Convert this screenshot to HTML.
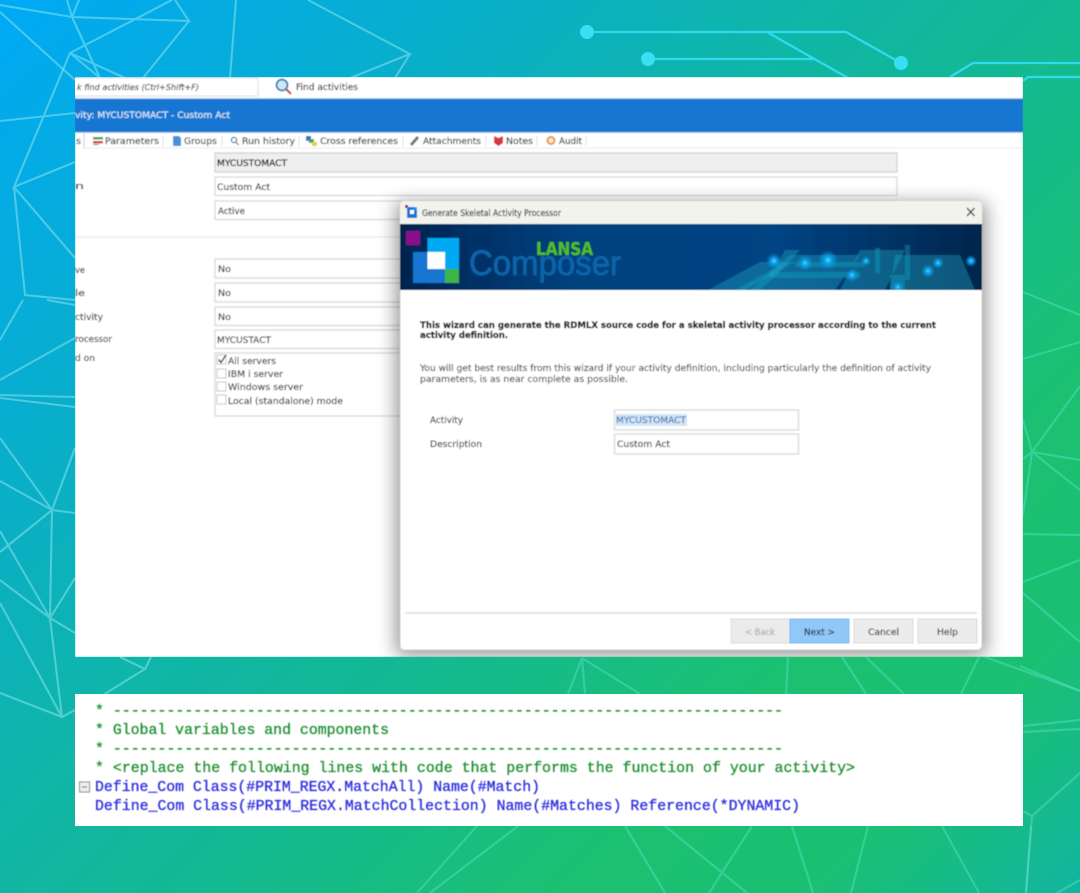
<!DOCTYPE html>
<html><head><meta charset="utf-8"><title>Skeletal Activity Processor</title>
<style>
html,body{margin:0;padding:0;width:1080px;height:893px;overflow:hidden}
body{background:linear-gradient(135deg,#00a9f6 0%,#0aafc5 27%,#0fb5aa 40%,#13b992 55%,#1bc170 74%,#1ac072 86%,#12b59f 100%)}
svg{display:block;position:absolute;left:0;top:0}
text{font-family:"DejaVu Sans","Liberation Sans",sans-serif;font-size:8.5px;fill:#3e3e3e;stroke:#3e3e3e;stroke-width:.18}
.m text{font-family:"Liberation Mono",monospace;font-size:14.88px;stroke-width:.3}
.f{fill:#fff;stroke:#ddd;stroke-width:1.5}
</style></head><body>
<svg width="1080" height="893" viewBox="0 0 1080 893" xmlns="http://www.w3.org/2000/svg">
<defs>
<clipPath id="pc"><rect x="75" y="77" width="948" height="580"/></clipPath>
<clipPath id="bc"><rect x="400" y="224" width="582" height="66"/></clipPath>
<filter id="b" x="-2%" y="-2%" width="104%" height="104%"><feGaussianBlur stdDeviation="0.5"/></filter>
<filter id="s" x="-20%" y="-20%" width="140%" height="140%"><feGaussianBlur stdDeviation="9"/></filter>
<linearGradient id="ban" x1="0" x2="1" y1="0" y2="0"><stop offset="0" stop-color="#02234f"/><stop offset=".1" stop-color="#022e62"/><stop offset=".3" stop-color="#00427e"/><stop offset=".65" stop-color="#004483"/><stop offset="1" stop-color="#02264c"/></linearGradient>
<radialGradient id="dot"><stop offset="0" stop-color="#4fe0ff"/><stop offset=".3" stop-color="#0fa8ee"/><stop offset="1" stop-color="#0a8fe0" stop-opacity="0"/></radialGradient>
</defs>

<!-- left polygon network -->
<g fill="none" stroke="#86e3ee" stroke-opacity=".55" stroke-width="2.1">
<path d="M0 5L72 17L189 21L175 0M72 17L67 0M72 17L79 0M72 17L100 78M0 12L75 80M70 53L172 0M189 21L143 78M70 53L100 78M70 53L125 78M236 0L230 78M308 0L410 54L350 78M410 54L395 78"/>
<path d="M70 53L14 187L75 162M14 187L75 258M14 187L25 295L75 300M0 121L75 113"/>
<path d="M23 300L0 340M47 300L75 305M75 338L0 380M0 395L75 397M0 398L75 407"/>
<path d="M0 438L52 510L75 448M0 481L52 510L75 513M52 510L0 552M52 510L50 618L75 578M0 531L50 618L75 633M0 580L50 618L62 717L75 710M0 603L62 717M0 693L62 717"/>
<path d="M120 657L145 669L151 657M145 669L103 695"/>
</g>
<!-- right / bottom network -->
<g fill="none" stroke="#5fe3c8" stroke-opacity=".42" stroke-width="2.2">
<path d="M582 658L568 694M582 658L585 694M582 658L640 694M788 657L786 694M842 657L866 694M866 657L904 694M979 657L961 694M985 657L1080 691"/>
<path d="M477 826L417 893M518 826L430 893M625 826L665 893M665 826L747 893M752 826L709 893M792 826L813 893M868 826L851 893M942 826L979 893M1031 826L1026 893M1080 880L1057 893"/>
<path d="M1023 292L1080 315M1023 359L1080 342M1080 386L1032 452L1080 460M1032 452L1080 490M1023 420L1032 452L1023 459M1032 452L1023 515M1023 534L1080 535M1023 582L1080 560M1023 593L1080 642M1020 666L1080 691M1023 726L1080 720M1023 732L1080 729M1080 773L1032 816L1023 811M1032 816L1026 893"/>
</g>
<!-- circuit -->
<g fill="none" stroke="#2fdcee" stroke-width="2.2">
<path d="M587 32H846L901 63M767 32L848 78M648 59H815M950 77L973 63H1080M1023 81L1028 77H1080"/>
</g>
<g fill="#36dff2"><circle cx="587" cy="32" r="7"/><circle cx="648" cy="59" r="7"/><circle cx="901" cy="63" r="7"/></g>

<!-- main panel -->
<g clip-path="url(#pc)"><g filter="url(#b)">
<rect x="75" y="77" width="948" height="580" fill="#fff"/>
<rect x="60" y="78" width="198" height="18" fill="#fff" stroke="#dcdcdc" stroke-width="1"/>
<text x="77" y="90" font-style="italic" textLength="122" lengthAdjust="spacingAndGlyphs" style="font-size:8px;fill:#555">k find activities (Ctrl+Shift+F)</text>
<circle cx="282" cy="85" r="5.500" fill="#cfe6f5" stroke="#2b7fb5" stroke-width="1.800"/>
<path d="M286 89L291 94" stroke="#d8352a" stroke-width="2.200"/>
<text x="296" y="90" textLength="62" lengthAdjust="spacingAndGlyphs">Find activities</text>
<rect x="75" y="98" width="948" height="1.400" fill="#a8c6ea"/>
<rect x="75" y="99" width="948" height="34" fill="#1976d2"/>
<rect x="75" y="132" width="948" height="1" fill="#a8c6ea"/>
<text x="75" y="118" textLength="155" lengthAdjust="spacingAndGlyphs" style="fill:#d8e8f8;stroke:#d8e8f8">vity: MYCUSTOMACT - Custom Act</text>

<!-- tabs -->
<path d="M75 133H84V149H75" fill="#fff"/>
<path d="M84 133V149" stroke="#ccc" stroke-width="1"/>
<path d="M84 148H1023" stroke="#ececec" stroke-width="1"/>
<text x="76" y="144" textLength="5" lengthAdjust="spacingAndGlyphs">s</text>
<rect x="93" y="137" width="10" height="2.400" fill="#3aa34a"/><rect x="93" y="141" width="10" height="2.400" fill="#d83a30"/><rect x="93" y="144" width="6" height="1" fill="#d83a30"/>
<text x="105" y="144" textLength="54" lengthAdjust="spacingAndGlyphs">Parameters</text>
<path d="M163 136V146M222 136V146M299 136V146M403 136V146M486 136V146M537 136V146M586 136V146" stroke="#ddd" stroke-width="1"/>
<path d="M173 136H179L181 138V146H173Z" fill="#4a90d9"/>
<text x="184" y="144" textLength="33" lengthAdjust="spacingAndGlyphs">Groups</text>
<circle cx="234" cy="140" r="2.600" fill="none" stroke="#2f7fb8" stroke-width="1.300"/><path d="M236 142L238.500 145" stroke="#c9503a" stroke-width="1.300"/>
<text x="242" y="144" textLength="53" lengthAdjust="spacingAndGlyphs">Run history</text>
<rect x="306" y="136" width="5" height="5" fill="#3a70c8"/><rect x="309" y="139" width="5" height="4" fill="#4aa84a"/><rect x="312" y="142" width="5" height="4" fill="#e6cc40"/>
<text x="320" y="144" textLength="78" lengthAdjust="spacingAndGlyphs">Cross references</text>
<path d="M411 145L418 137" stroke="#777" stroke-width="3"/>
<text x="423" y="144" textLength="58" lengthAdjust="spacingAndGlyphs">Attachments</text>
<path d="M494 136L498.500 138L503 136V143L498.500 146L494 143Z" fill="#d83838"/>
<text x="506" y="144" textLength="27" lengthAdjust="spacingAndGlyphs">Notes</text>
<circle cx="551" cy="140.500" r="3.600" fill="#fbe8c8" stroke="#e8903a" stroke-width="1.800"/>
<text x="559" y="144" textLength="23" lengthAdjust="spacingAndGlyphs">Audit</text>

<!-- form -->
<rect x="215" y="153" width="682" height="19" fill="#efefef" stroke="#d6d6d6" stroke-width="1.500"/>
<text x="217" y="166" textLength="70" lengthAdjust="spacingAndGlyphs" style="fill:#222;stroke:#222;stroke-width:.3">MYCUSTOMACT</text>
<rect class="f" x="215" y="177" width="682" height="18.500"/>
<text x="217" y="190" textLength="53" lengthAdjust="spacingAndGlyphs">Custom Act</text>
<text x="75" y="189" textLength="9" lengthAdjust="spacingAndGlyphs">n</text>
<rect class="f" x="215" y="201" width="682" height="18.500"/>
<text x="218" y="214" textLength="27" lengthAdjust="spacingAndGlyphs">Active</text>
<path d="M75 237H400" stroke="#e3eef8" stroke-width="1.500"/>
<rect class="f" x="215" y="259" width="300" height="19"/><text x="218" y="272" textLength="13" lengthAdjust="spacingAndGlyphs">No</text>
<rect class="f" x="215" y="283" width="300" height="19"/><text x="218" y="296" textLength="13" lengthAdjust="spacingAndGlyphs">No</text>
<rect class="f" x="215" y="307" width="300" height="18.500"/><text x="218" y="320" textLength="13" lengthAdjust="spacingAndGlyphs">No</text>
<rect class="f" x="215" y="330" width="300" height="18.500"/><text x="217" y="343" textLength="54" lengthAdjust="spacingAndGlyphs">MYCUSTACT</text>
<rect class="f" x="215" y="353" width="300" height="63"/>
<text x="75" y="273" textLength="10" lengthAdjust="spacingAndGlyphs">ve</text>
<text x="75" y="296" textLength="10" lengthAdjust="spacingAndGlyphs">le</text>
<text x="75" y="320" textLength="28" lengthAdjust="spacingAndGlyphs">ctivity</text>
<text x="75" y="342" textLength="37" lengthAdjust="spacingAndGlyphs">rocessor</text>
<text x="75" y="361" textLength="20" lengthAdjust="spacingAndGlyphs">d on</text>
<g fill="#fff" stroke="#c8c8c8" stroke-width="1"><rect x="217" y="355" width="9" height="9"/><rect x="217" y="369" width="9" height="9"/><rect x="217" y="382" width="9" height="9"/><rect x="217" y="395" width="9" height="9"/></g>
<path d="M218.500 359.500L221 362.500L226 355" fill="none" stroke="#333" stroke-width="1.400"/>
<text x="228" y="364" textLength="48" lengthAdjust="spacingAndGlyphs">All servers</text>
<text x="228" y="377" textLength="55" lengthAdjust="spacingAndGlyphs">IBM i server</text>
<text x="228" y="390" textLength="75" lengthAdjust="spacingAndGlyphs">Windows server</text>
<text x="228" y="404" textLength="115" lengthAdjust="spacingAndGlyphs">Local (standalone) mode</text>

<!-- dialog -->
<rect x="396" y="203" width="590" height="452" fill="#000" fill-opacity=".42" filter="url(#s)"/>
<rect x="400" y="201" width="582" height="449" rx="4" fill="#fff" stroke="#c9c9c9" stroke-width="1"/>
<path d="M400 224V205a4 4 0 0 1 4-4H978a4 4 0 0 1 4 4V224Z" fill="#f3f3ee"/>
<rect x="405" y="205" width="3" height="3" fill="#8a0a8a"/>
<rect x="407" y="207" width="10" height="11" fill="#1976d2"/><rect x="410" y="210" width="4" height="4" fill="#fff"/><rect x="414" y="207" width="3" height="3" fill="#03a9f4"/>
<text x="422" y="216" textLength="139" lengthAdjust="spacingAndGlyphs" style="fill:#333;stroke:#333">Generate Skeletal Activity Processor</text>
<path d="M967 208L974.500 216M974.500 208L967 216" stroke="#444" stroke-width="1.300"/>

<rect x="400" y="224" width="582" height="66" fill="url(#ban)"/>
<g clip-path="url(#bc)">
<g fill="#1dafc8" fill-opacity=".36">
<path d="M708 290L760 262H795L745 290Z"/><path d="M735 290L775 268L785 250L800 250L780 272L760 290Z"/><path d="M750 290L790 255H860L835 290Z"/><path d="M840 290L860 250H905L885 290Z"/><path d="M890 290L895 255H960L975 290Z"/>
</g>
<g fill="#17b0c8" fill-opacity=".35"><rect x="795" y="262" width="70" height="5"/><rect x="770" y="272" width="90" height="6"/><rect x="890" y="275" width="15" height="15"/><rect x="875" y="248" width="5" height="25"/><rect x="905" y="245" width="5" height="35"/></g>
<g fill="url(#dot)">
<circle cx="774" cy="261" r="8"/><circle cx="805" cy="263" r="8"/><circle cx="828" cy="260" r="10"/><circle cx="852" cy="275" r="7"/><circle cx="866" cy="261" r="5"/><circle cx="928" cy="271" r="7"/><circle cx="938" cy="263" r="6"/><circle cx="971" cy="261" r="6"/><circle cx="898" cy="287" r="6"/>
</g>
</g>
<rect x="406" y="231" width="14" height="14" fill="#8a0a8a"/>
<rect x="427.500" y="238" width="31.500" height="31" fill="#03a9f4"/>
<rect x="413" y="252" width="32" height="31" fill="#1976d2"/>
<rect x="427.500" y="252" width="17.500" height="17" fill="#fff"/>
<rect x="445" y="269" width="14" height="14" fill="#3cb54a"/>
<text x="469" y="275" textLength="152" lengthAdjust="spacingAndGlyphs" style="font-family:'Liberation Sans',sans-serif;font-size:35px;fill:#1064aa;stroke:#1064aa;stroke-width:.7">Composer</text>
<text x="536" y="255" textLength="57" lengthAdjust="spacingAndGlyphs" style="font-family:'DejaVu Sans',sans-serif;font-weight:bold;font-size:18px;fill:#4fc021;stroke:#4fc021;stroke-width:.2">LANSA</text>

<text x="420" y="328" textLength="516" lengthAdjust="spacingAndGlyphs" style="font-weight:bold;fill:#111;stroke:#111;stroke-width:.25">This wizard can generate the RDMLX source code for a skeletal activity processor according to the current</text>
<text x="420" y="338" textLength="88" lengthAdjust="spacingAndGlyphs" style="font-weight:bold;fill:#111;stroke:#111;stroke-width:.25">activity definition.</text>
<text x="420" y="371" textLength="511" lengthAdjust="spacingAndGlyphs" style="fill:#555;stroke:#555">You will get best results from this wizard if your activity definition, including particularly the definition of activity</text>
<text x="420" y="382" textLength="208" lengthAdjust="spacingAndGlyphs" style="fill:#555;stroke:#555">parameters, is as near complete as possible.</text>
<text x="430" y="423" textLength="33" lengthAdjust="spacingAndGlyphs">Activity</text>
<text x="430" y="447" textLength="52" lengthAdjust="spacingAndGlyphs">Description</text>
<rect class="f" x="614.500" y="410" width="184" height="20"/>
<rect x="616" y="414" width="71" height="12" fill="#d3e5f6"/>
<text x="616" y="423" textLength="70" lengthAdjust="spacingAndGlyphs" style="fill:#4a7cb8;stroke:#4a7cb8">MYCUSTOMACT</text>
<rect class="f" x="614.500" y="434" width="184" height="20"/>
<text x="617" y="447" textLength="53" lengthAdjust="spacingAndGlyphs">Custom Act</text>

<path d="M405 613H977" stroke="#d6d6d6" stroke-width="1.200"/>
<rect x="731" y="619" width="59" height="24" fill="#ebebeb" stroke="#dcdcdc"/>
<text x="745" y="635" textLength="30" lengthAdjust="spacingAndGlyphs" style="fill:#b0b0b0;stroke:#b0b0b0">&lt; Back</text>
<rect x="790" y="619" width="59" height="24" fill="#90c8f8" stroke="#6db5f2"/>
<text x="804" y="635" textLength="31" lengthAdjust="spacingAndGlyphs" style="fill:#234;stroke:#234">Next &gt;</text>
<rect x="854" y="619" width="59" height="24" fill="#ececec" stroke="#d8d8d8"/>
<text x="868" y="635" textLength="31" lengthAdjust="spacingAndGlyphs">Cancel</text>
<rect x="918" y="619" width="59" height="24" fill="#ececec" stroke="#d8d8d8"/>
<text x="937" y="635" textLength="21" lengthAdjust="spacingAndGlyphs">Help</text>
</g></g>

<!-- code panel -->
<rect x="75" y="694" width="948" height="132" fill="#fff"/>
<g class="m" filter="url(#b)">
<text x="95" y="715" textLength="688" lengthAdjust="spacingAndGlyphs" style="fill:#1f8f30;stroke:#1f8f30">* ---------------------------------------------------------------------------</text>
<text x="95" y="734" textLength="294" lengthAdjust="spacingAndGlyphs" style="fill:#1f8f30;stroke:#1f8f30">* Global variables and components</text>
<text x="95" y="753" textLength="688" lengthAdjust="spacingAndGlyphs" style="fill:#1f8f30;stroke:#1f8f30">* ---------------------------------------------------------------------------</text>
<text x="95" y="772" textLength="760" lengthAdjust="spacingAndGlyphs" style="fill:#1f8f30;stroke:#1f8f30">* &lt;replace the following lines with code that performs the function of your activity&gt;</text>
<text x="95" y="791" textLength="445" lengthAdjust="spacingAndGlyphs" style="fill:#2a2ae0;stroke:#2a2ae0">Define_Com Class(#PRIM_REGX.MatchAll) Name(#Match)</text>
<text x="95" y="810" textLength="705" lengthAdjust="spacingAndGlyphs" style="fill:#2a2ae0;stroke:#2a2ae0">Define_Com Class(#PRIM_REGX.MatchCollection) Name(#Matches) Reference(*DYNAMIC)</text>
<rect x="79.500" y="782" width="10" height="10" fill="#eee" stroke="#888"/>
<path d="M82 787H87" stroke="#555"/>
</g>
</svg>
</body></html>
